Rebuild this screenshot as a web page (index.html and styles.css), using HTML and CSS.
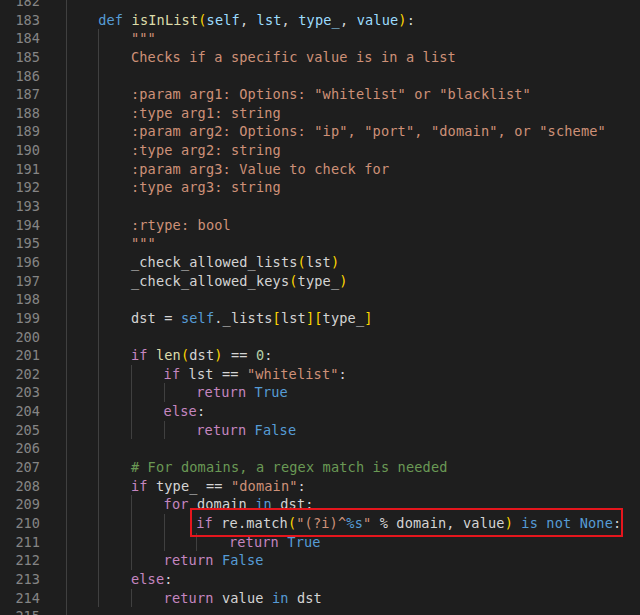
FILE: index.html
```html
<!DOCTYPE html>
<html>
<head>
<meta charset="utf-8">
<link rel="stylesheet" href="styles.css">
</head>
<body>
<div class="editor">
<div class="row"><span class="ln">182</span><span class="code"><span class="g"></span></span></div>
<div class="row"><span class="ln">183</span><span class="code"><span class="g"></span><span class="kw">def</span> <span class="fn">isInList</span><span class="br">(</span><span class="pa">self</span>, <span class="pa">lst</span>, <span class="pa">type_</span>, <span class="pa">value</span><span class="br">)</span>:</span></div>
<div class="row"><span class="ln">184</span><span class="code"><span class="g"></span><span class="g"></span><span class="st">"""</span></span></div>
<div class="row"><span class="ln">185</span><span class="code"><span class="g"></span><span class="g"></span><span class="st">Checks if a specific value is in a list</span></span></div>
<div class="row"><span class="ln">186</span><span class="code"><span class="g"></span><span class="g"></span></span></div>
<div class="row"><span class="ln">187</span><span class="code"><span class="g"></span><span class="g"></span><span class="st">:param arg1: Options: "whitelist" or "blacklist"</span></span></div>
<div class="row"><span class="ln">188</span><span class="code"><span class="g"></span><span class="g"></span><span class="st">:type arg1: string</span></span></div>
<div class="row"><span class="ln">189</span><span class="code"><span class="g"></span><span class="g"></span><span class="st">:param arg2: Options: "ip", "port", "domain", or "scheme"</span></span></div>
<div class="row"><span class="ln">190</span><span class="code"><span class="g"></span><span class="g"></span><span class="st">:type arg2: string</span></span></div>
<div class="row"><span class="ln">191</span><span class="code"><span class="g"></span><span class="g"></span><span class="st">:param arg3: Value to check for</span></span></div>
<div class="row"><span class="ln">192</span><span class="code"><span class="g"></span><span class="g"></span><span class="st">:type arg3: string</span></span></div>
<div class="row"><span class="ln">193</span><span class="code"><span class="g"></span><span class="g"></span></span></div>
<div class="row"><span class="ln">194</span><span class="code"><span class="g"></span><span class="g"></span><span class="st">:rtype: bool</span></span></div>
<div class="row"><span class="ln">195</span><span class="code"><span class="g"></span><span class="g"></span><span class="st">"""</span></span></div>
<div class="row"><span class="ln">196</span><span class="code"><span class="g"></span><span class="g"></span>_check_allowed_lists<span class="br">(</span>lst<span class="br">)</span></span></div>
<div class="row"><span class="ln">197</span><span class="code"><span class="g"></span><span class="g"></span>_check_allowed_keys<span class="br">(</span>type_<span class="br">)</span></span></div>
<div class="row"><span class="ln">198</span><span class="code"><span class="g"></span><span class="g"></span></span></div>
<div class="row"><span class="ln">199</span><span class="code"><span class="g"></span><span class="g"></span>dst = <span class="kw">self</span>._lists<span class="br">[</span>lst<span class="br">][</span>type_<span class="br">]</span></span></div>
<div class="row"><span class="ln">200</span><span class="code"><span class="g"></span><span class="g"></span></span></div>
<div class="row"><span class="ln">201</span><span class="code"><span class="g"></span><span class="g"></span><span class="ct">if</span> <span class="fn">len</span><span class="br">(</span>dst<span class="br">)</span> == <span class="nu">0</span>:</span></div>
<div class="row"><span class="ln">202</span><span class="code"><span class="g"></span><span class="g"></span><span class="g"></span><span class="ct">if</span> lst == <span class="st">"whitelist"</span>:</span></div>
<div class="row"><span class="ln">203</span><span class="code"><span class="g"></span><span class="g"></span><span class="g"></span><span class="g"></span><span class="ct">return</span> <span class="kw">True</span></span></div>
<div class="row"><span class="ln">204</span><span class="code"><span class="g"></span><span class="g"></span><span class="g"></span><span class="ct">else</span>:</span></div>
<div class="row"><span class="ln">205</span><span class="code"><span class="g"></span><span class="g"></span><span class="g"></span><span class="g"></span><span class="ct">return</span> <span class="kw">False</span></span></div>
<div class="row"><span class="ln">206</span><span class="code"><span class="g"></span><span class="g"></span></span></div>
<div class="row"><span class="ln">207</span><span class="code"><span class="g"></span><span class="g"></span><span class="cm"># For domains, a regex match is needed</span></span></div>
<div class="row"><span class="ln">208</span><span class="code"><span class="g"></span><span class="g"></span><span class="ct">if</span> type_ == <span class="st">"domain"</span>:</span></div>
<div class="row"><span class="ln">209</span><span class="code"><span class="g"></span><span class="g"></span><span class="g"></span><span class="ct">for</span> domain <span class="kw">in</span> dst:</span></div>
<div class="row"><span class="ln">210</span><span class="code"><span class="g"></span><span class="g"></span><span class="g"></span><span class="g"></span><span class="hl"><span class="ct">if</span> re.match<span class="br">(</span><span class="st">"(?i)^</span><span class="kw">%s</span><span class="st">"</span> % domain, value<span class="br">)</span> <span class="kw">is not None</span>:</span></span></div>
<div class="row"><span class="ln">211</span><span class="code"><span class="g"></span><span class="g"></span><span class="g"></span><span class="g"></span><span class="g"></span><span class="ct">return</span> <span class="kw">True</span></span></div>
<div class="row"><span class="ln">212</span><span class="code"><span class="g"></span><span class="g"></span><span class="g"></span><span class="ct">return</span> <span class="kw">False</span></span></div>
<div class="row"><span class="ln">213</span><span class="code"><span class="g"></span><span class="g"></span><span class="ct">else</span>:</span></div>
<div class="row"><span class="ln">214</span><span class="code"><span class="g"></span><span class="g"></span><span class="g"></span><span class="ct">return</span> value <span class="kw">in</span> dst</span></div>
<div class="row"><span class="ln">215</span><span class="code"><span class="g"></span></span></div>
</div>
</body>
</html>
```
FILE: styles.css
```css
html, body {
  margin: 0;
  padding: 0;
  background: #1e1e1e;
  overflow: hidden;
}
.editor {
  margin-top: -8px;
  font-family: "DejaVu Sans Mono", monospace;
  font-size: 13.6px;
  letter-spacing: 0.15px;
  color: #d4d4d4;
}
.row {
  display: flex;
  height: 18.65px;
  line-height: 18.65px;
}
.ln {
  width: 40px;
  flex: none;
  text-align: right;
  color: #858585;
  letter-spacing: 0;
}
.code {
  display: block;
  padding-left: 25.5px;
  white-space: pre;
}
.g {
  display: inline-block;
  width: 32.7px;
  height: 18.65px;
  vertical-align: top;
  border-left: 1px solid #404040;
  box-sizing: border-box;
}
.kw { color: #569cd6; }
.ct { color: #c586c0; }
.fn { color: #dcdcaa; }
.pa { color: #9cdcfe; }
.st { color: #ce9178; }
.nu { color: #b5cea8; }
.cm { color: #6a9955; }
.br { color: #ffd700; }
.hl {
  position: relative;
  display: inline-block;
  vertical-align: top;
}
.hl::after {
  content: "";
  position: absolute;
  left: -6px;
  right: -2px;
  top: -6px;
  bottom: -4px;
  border: 2px solid #e5161d;
}
```
